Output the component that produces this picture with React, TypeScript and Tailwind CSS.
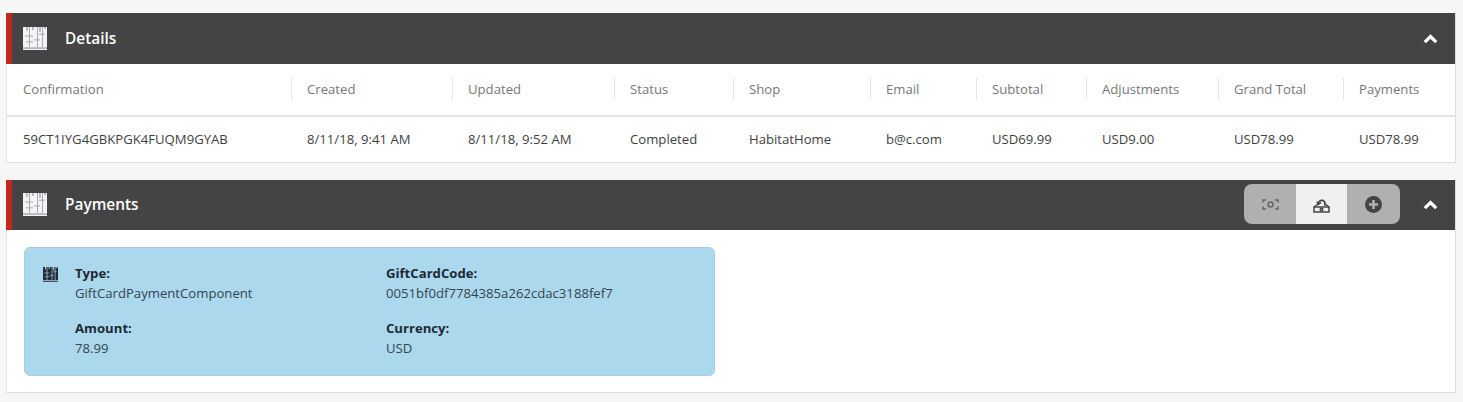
import React from 'react';

const columns = [
  { label: 'Confirmation', value: '59CT1IYG4GBKPGK4FUQM9GYAB' },
  { label: 'Created', value: '8/11/18, 9:41 AM' },
  { label: 'Updated', value: '8/11/18, 9:52 AM' },
  { label: 'Status', value: 'Completed' },
  { label: 'Shop', value: 'HabitatHome' },
  { label: 'Email', value: 'b@c.com' },
  { label: 'Subtotal', value: 'USD69.99' },
  { label: 'Adjustments', value: 'USD9.00' },
  { label: 'Grand Total', value: 'USD78.99' },
  { label: 'Payments', value: 'USD78.99' },
];

const gridCols = 'grid grid-cols-[284px_161px_162px_119px_137px_106px_110px_132px_125px_1fr]';

const TableIcon = ({ className, line = '#a9a3b4' }: { className?: string; line?: string }) => (
  <svg viewBox="0 0 24 24" preserveAspectRatio="none" className={className}>
    <rect width="24" height="24" fill="currentColor" />
    <g stroke={line} strokeWidth="1" fill="none">
      <path d="M6.5 0v21M14.5 0v21M19.5 0v21" />
      <path d="M2 9.5h8M11 13.5h6M16 7.5h6M3 15.5h7" />
    </g>
    <path d="M4 0v4M10 0v3M17 0v5M22 0v2" stroke={line} strokeWidth="1.5" />
    <path d="M0 22h24" stroke={line} strokeWidth="1.5" />
  </svg>
);

const Chevron = () => (
  <svg viewBox="0 0 15 10" className="w-[15px] h-[10px]">
    <path d="M1.8 8.2 7.5 2.6l5.7 5.6" fill="none" stroke="#ffffff" strokeWidth="3.2" />
  </svg>
);

const SectionHeader = ({ title, height, children }: { title: string; height: string; children?: React.ReactNode }) => (
  <div className={`${height} flex items-center bg-[#444444] border-l-[6px] border-[#c1291d] pl-[11px] pr-[17px]`}>
    <TableIcon className="w-6 h-[23px] text-[#f4f4f4]" />
    <h2 className="ml-[18px] text-[15.4px] font-semibold text-white">{title}</h2>
    <div className="ml-auto flex items-center">
      {children}
      <Chevron />
    </div>
  </div>
);

const Field = ({ label, value }: { label: string; value: string }) => (
  <div>
    <div className="h-5 leading-5 font-bold text-[#1d2a33]">{label}</div>
    <div className="h-5 leading-5 text-[#33454f]">{value}</div>
  </div>
);

export default function App() {
  return (
    <div className="min-h-[402px] bg-[#f6f6f6] pt-[13px] pl-[6px] pr-[7px] text-[13.15px] font-['Open_Sans',sans-serif]">
      <section className="border-b border-r border-[#dedede] bg-white">
        <SectionHeader title="Details" height="h-[51px]" />
        <div className={`${gridCols} h-[53px] pb-[2px] items-center border-b-2 border-[#e4e4e4] border-l border-l-[#e4e4e4]`}>
          {columns.map((c, i) => (
            <div key={c.label} className={`h-[22px] leading-[22px] text-[#777777] ${i > 0 ? 'border-l border-[#e6e6e6] pl-[15px]' : 'pl-4'}`}>
              {c.label}
            </div>
          ))}
        </div>
        <div className={`${gridCols} h-[45px] items-center border-l border-[#e4e4e4]`}>
          {columns.map((c, i) => (
            <div key={c.label} className={`text-[#3f3f3f] whitespace-nowrap ${i > 0 ? 'border-l border-transparent pl-[15px]' : 'pl-4'}`}>
              {c.value}
            </div>
          ))}
        </div>
      </section>

      <section className="mt-[17px] border-b border-r border-[#dedede] bg-white">
        <SectionHeader title="Payments" height="h-[50px] pb-px">
          <div className="mr-[23px] mb-px flex h-10 w-[156px] overflow-hidden rounded-lg bg-[#b0b0b0]">
            <div className="flex w-[52px] items-center justify-center">
              <svg viewBox="0 0 17 11" className="w-[17px] h-[11px]" fill="none" stroke="#666666" strokeWidth="1.5">
                <path d="M4 1H1v2.5M13 1h3v2.5M4 10H1V7.5M13 10h3V7.5" />
                <circle cx="8.5" cy="5.5" r="2.5" />
              </svg>
            </div>
            <div className="flex w-[51px] items-center justify-center bg-[#f0f0f0]">
              <svg viewBox="0 0 17 17" className="w-[17px] h-[17px]" fill="none" stroke="#444444" strokeWidth="1.5">
                <path d="M1 11 5 8M16 11l-4-3" />
                <rect x="1" y="11" width="15" height="5" />
                <circle cx="8.5" cy="13.5" r="1.3" />
                <path d="M5.5 8a3.3 3.3 0 1 1 6 1.5" strokeWidth="1.8" />
                <path d="M3.8 5.6 5.4 8.4 8 6.6" strokeWidth="1.4" />
              </svg>
            </div>
            <div className="flex flex-1 items-center justify-center">
              <svg viewBox="0 0 17 17" className="w-[17px] h-[17px]">
                <circle cx="8.5" cy="8.5" r="8.5" fill="#444444" />
                <path d="M8.5 4v9M4 8.5h9" stroke="#b0b0b0" strokeWidth="2.6" />
              </svg>
            </div>
          </div>
        </SectionHeader>
        <div className="border-l border-[#e4e4e4] pt-[17px] pb-[16px] pl-[17px]">
          <div className="flex h-[129px] w-[691px] rounded-md border border-[#a3cfe6] bg-[#acd8ee] pt-[15px] pl-[18px]">
            <TableIcon className="mt-[4px] h-[15px] w-[15px] text-[#1d2f3c]" line="#c9d6dd" />
            <div className="ml-[17px] grid grid-cols-[311px_1fr] gap-y-[15px] self-start">
              <Field label="Type:" value="GiftCardPaymentComponent" />
              <Field label="GiftCardCode:" value="0051bf0df7784385a262cdac3188fef7" />
              <Field label="Amount:" value="78.99" />
              <Field label="Currency:" value="USD" />
            </div>
          </div>
        </div>
      </section>
    </div>
  );
}
